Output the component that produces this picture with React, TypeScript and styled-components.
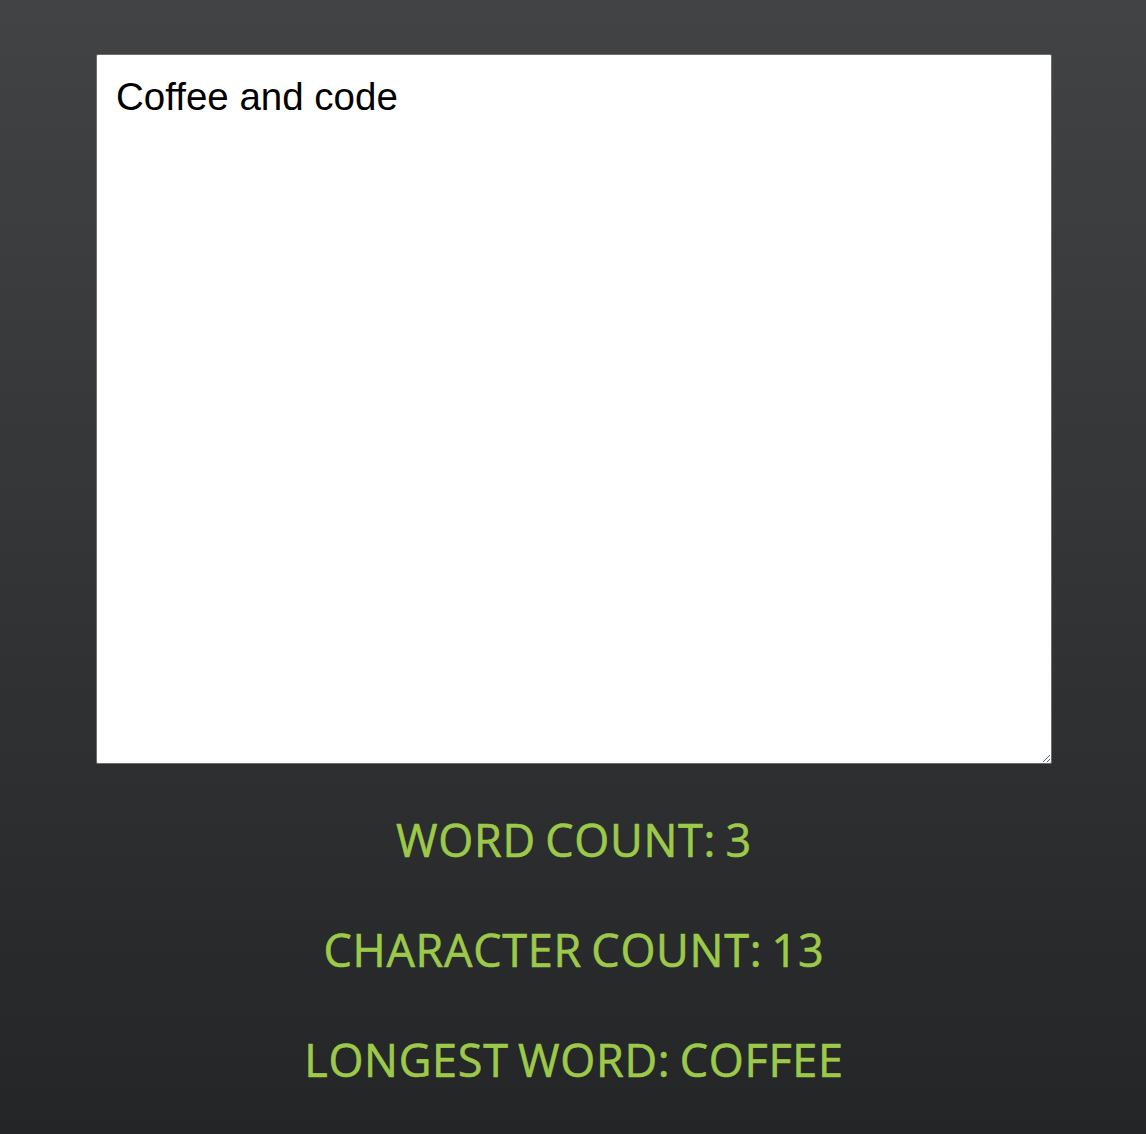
import React, { useState } from "react";
import styled, { createGlobalStyle } from "styled-components";

const Global = createGlobalStyle`
  html, body { margin: 0; padding: 0; }
  body {
    min-height: 1134px;
    background: linear-gradient(to bottom, #414345, #232526);
  }
`;

const Page = styled.main`
  display: flex;
  flex-direction: column;
  align-items: center;
  padding-top: 54px;
  padding-left: 2px;
  min-height: 1134px;
  box-sizing: border-box;
`;

const Editor = styled.textarea`
  width: 956px;
  height: 710px;
  box-sizing: border-box;
  border: 1px solid #6e6e6e;
  border-radius: 2px;
  background: #fff;
  padding: 20px 19px;
  font-family: "Liberation Sans", Arial, sans-serif;
  font-size: 38.5px;
  line-height: 44px;
  color: #000;
  resize: both;
  outline: none;
`;

const Stats = styled.div`
  display: flex;
  flex-direction: column;
  align-items: center;
  gap: 64px;
  margin-top: 53px;
`;

const Stat = styled.p`
  margin: 0;
  font-family: "Open Sans", "Noto Sans", sans-serif;
  font-size: 45px;
  font-weight: 400;
  line-height: 46px;
  letter-spacing: 0.7px;
  word-spacing: -3px;
  color: #9dc94a;
  -webkit-text-stroke: 0.6px #9dc94a;
  text-transform: uppercase;
`;

export default function App() {
  const [text, setText] = useState("Coffee and code");
  const words = text.split(/\s+/).filter(Boolean);
  const longest = words.reduce((a, w) => (w.length > a.length ? w : a), "");
  return (
    <>
      <Global />
      <Page>
        <Editor value={text} onChange={(e) => setText(e.target.value)} />
        <Stats>
          <Stat>Word count: {words.length}</Stat>
          <Stat>Character count: {text.replace(/\s/g, "").length}</Stat>
          <Stat>Longest word: {longest}</Stat>
        </Stats>
      </Page>
    </>
  );
}
